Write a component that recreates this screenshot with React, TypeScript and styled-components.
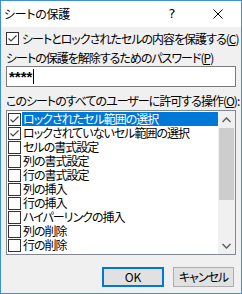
import React from "react";
import styled, { createGlobalStyle } from "styled-components";

const Global = createGlobalStyle`
  html, body { margin: 0; padding: 0; width: 242px; height: 294px; overflow: hidden; background: #f0f0f0; }
  * { box-sizing: border-box; }
  body { font-family: "Noto Sans CJK JP", "Noto Sans", sans-serif; font-size: 12px; line-height: 14px; color: #000; font-feature-settings: "palt"; letter-spacing: -1px; }
`;

const Window = styled.div`
  width: 242px;
  height: 294px;
  border: 1px solid #3c8fdb;
  background: #f0f0f0;
  display: flex;
  flex-direction: column;
`;

const TitleBar = styled.div`
  height: 26px;
  background: #fff;
  display: flex;
  align-items: center;
  padding-left: 3px;
`;

const Title = styled.div`
  flex: 1;
  font-size: 12px;
  letter-spacing: -0.3px;
`;

const TitleButton = styled.div`
  width: 46px;
  height: 26px;
  display: flex;
  align-items: center;
  justify-content: center;
  font-family: "Segoe UI", "DejaVu Sans", sans-serif;
  font-size: 13px;
  letter-spacing: 0;
`;

const Body = styled.div`
  flex: 1;
  display: flex;
  flex-direction: column;
  padding: 0 5px;
`;

const CheckRow = styled.label`
  display: flex;
  align-items: center;
  gap: 3px;
  height: 13px;
  margin-top: 5px;
  white-space: nowrap;
`;

const Box = styled.span`
  width: 13px;
  height: 13px;
  flex: none;
  border: 1px solid #333;
  background: #fff;
  display: flex;
  align-items: center;
  justify-content: center;
`;

const Label = styled.div<{ $top: number }>`
  margin-top: ${(p) => p.$top}px;
  height: 14px;
  white-space: nowrap;
`;

const U = styled.span`
  text-decoration: underline;
  text-underline-offset: 1px;
`;

const Input = styled.div`
  margin-top: 1px;
  height: 21px;
  background: #fff;
  border: 1px solid #7a7a7a;
  display: flex;
  align-items: center;
  padding-left: 2px;
  font-family: "Liberation Sans", sans-serif;
  font-size: 15px;
  font-weight: bold;
  letter-spacing: 0;
`;

const Caret = styled.span`
  width: 1px;
  height: 15px;
  background: #000;
  margin-left: 1px;
`;

const ListBox = styled.div`
  margin-top: 2px;
  height: 145px;
  border: 1px solid #828790;
  background: #fff;
  display: flex;
`;

const Items = styled.div`
  flex: 1;
  padding: 1px 0 0 1px;
  overflow: hidden;
`;

const Item = styled.div`
  height: 14px;
  display: flex;
  align-items: center;
  gap: 1px;
  white-space: nowrap;
`;

const ItemText = styled.span<{ $selected?: boolean }>`
  flex: 1;
  height: 14px;
  padding-left: 1px;
  background: ${(p) => (p.$selected ? "#0078d7" : "transparent")};
  color: ${(p) => (p.$selected ? "#fff" : "#000")};
`;

const ScrollBar = styled.div`
  width: 17px;
  background: #f0f0f0;
  display: flex;
  flex-direction: column;
`;

const Arrow = styled.div`
  height: 17px;
  display: flex;
  align-items: center;
  justify-content: center;
`;

const Track = styled.div`
  flex: 1;
  padding: 0 1px;
  display: flex;
  flex-direction: column;
`;

const Thumb = styled.div`
  height: 72px;
  background: #cdcdcd;
`;

const Buttons = styled.div`
  margin-top: 12px;
  margin-right: 2px;
  display: flex;
  justify-content: flex-end;
  gap: 9px;
`;

const Button = styled.div<{ $default?: boolean }>`
  width: ${(p) => (p.$default ? 62 : 61)}px;
  height: 20px;
  background: #e1e1e1;
  border: ${(p) => (p.$default ? "2px solid #0078d7" : "1px solid #adadad")};
  display: flex;
  align-items: center;
  justify-content: center;
  letter-spacing: ${(p) => (p.$default ? "0" : "-1px")};
`;

const Check = () => (
  <svg width="11" height="11" viewBox="0 0 11 11">
    <path d="M1.5 5.5 L4 8 L9.5 2.5" fill="none" stroke="#444" strokeWidth="1.2" />
  </svg>
);

const items = [
  { t: "ロックされたセル範囲の選択", c: true, s: true },
  { t: "ロックされていないセル範囲の選択", c: true },
  { t: "セルの書式設定" },
  { t: "列の書式設定" },
  { t: "行の書式設定" },
  { t: "列の挿入" },
  { t: "行の挿入" },
  { t: "ハイパーリンクの挿入" },
  { t: "列の削除" },
  { t: "行の削除" },
];

export default function App() {
  return (
    <>
      <Global />
      <Window>
        <TitleBar>
          <Title>シートの保護</Title>
          <TitleButton>?</TitleButton>
          <TitleButton>
            <svg width="10" height="10" viewBox="0 0 10 10">
              <path d="M0.5 0.5 L9.5 9.5 M9.5 0.5 L0.5 9.5" stroke="#000" strokeWidth="1" />
            </svg>
          </TitleButton>
        </TitleBar>
        <Body>
          <CheckRow>
            <Box>
              <Check />
            </Box>
            <span>
              シートとロックされたセルの内容を保護する(<U>C</U>)
            </span>
          </CheckRow>
          <Label $top={6}>
            シートの保護を解除するためのパスワード(<U>P</U>)
          </Label>
          <Input>
            ****
            <Caret />
          </Input>
          <Label $top={7}>
            このシートのすべてのユーザーに許可する操作(<U>O</U>):
          </Label>
          <ListBox>
            <Items>
              {items.map((it) => (
                <Item key={it.t}>
                  <Box>{it.c && <Check />}</Box>
                  <ItemText $selected={it.s}>{it.t}</ItemText>
                </Item>
              ))}
            </Items>
            <ScrollBar>
              <Arrow>
                <svg width="9" height="6" viewBox="0 0 9 6">
                  <path d="M0.5 5 L4.5 1 L8.5 5" fill="none" stroke="#606060" strokeWidth="1.5" />
                </svg>
              </Arrow>
              <Track>
                <Thumb />
              </Track>
              <Arrow>
                <svg width="9" height="6" viewBox="0 0 9 6">
                  <path d="M0.5 1 L4.5 5 L8.5 1" fill="none" stroke="#606060" strokeWidth="1.5" />
                </svg>
              </Arrow>
            </ScrollBar>
          </ListBox>
          <Buttons>
            <Button $default>OK</Button>
            <Button>キャンセル</Button>
          </Buttons>
        </Body>
      </Window>
    </>
  );
}
